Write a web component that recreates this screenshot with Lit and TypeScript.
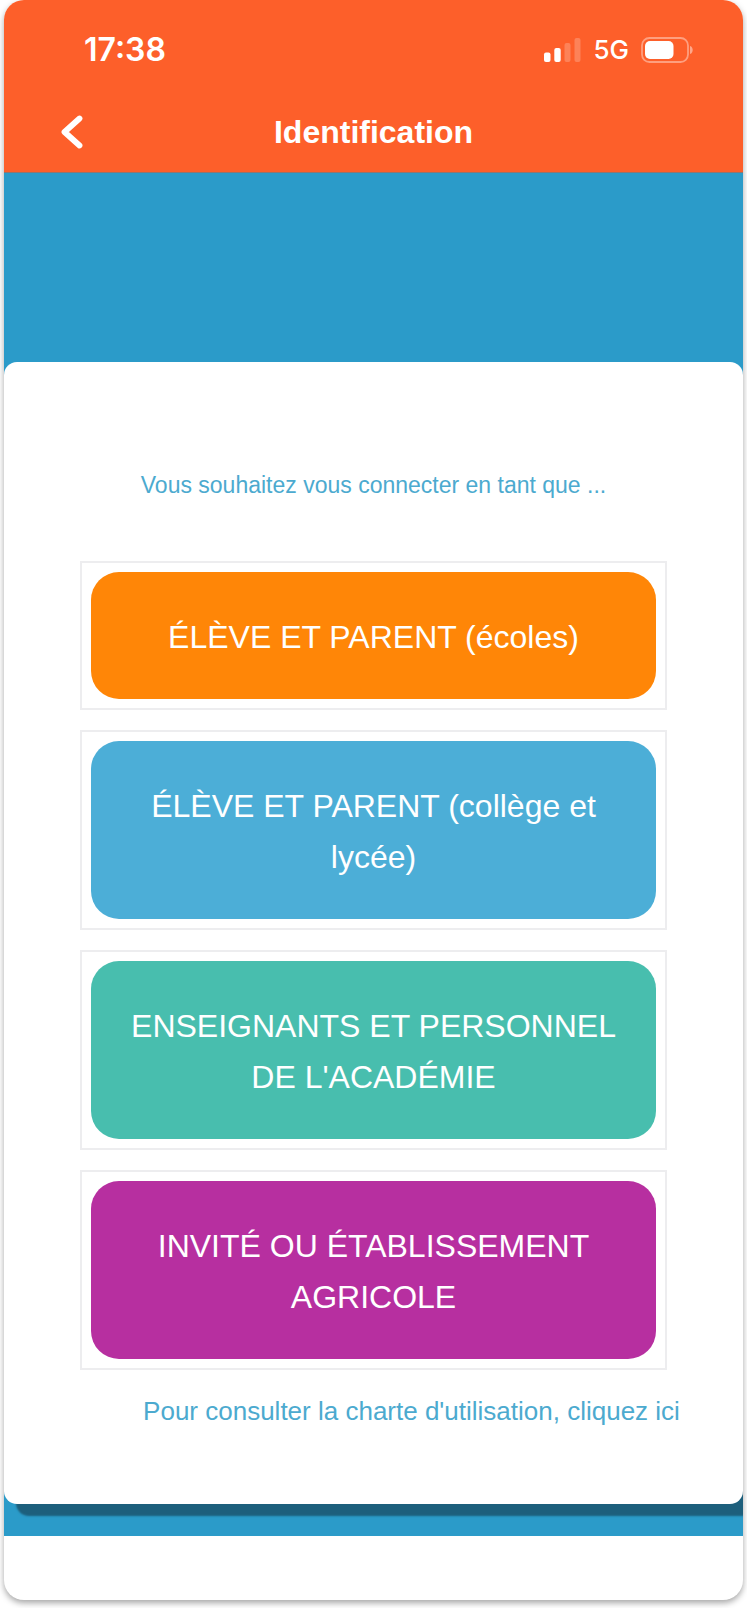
import { LitElement, html, css } from "lit";
import { customElement, property } from "lit/decorators.js";

interface Profile {
  id: string;
  label: string;
}

const PROFILES: Profile[] = [
  { id: "ecole", label: "ÉLÈVE ET PARENT (écoles)" },
  { id: "college", label: "ÉLÈVE ET PARENT (collège et lycée)" },
  { id: "personnel", label: "ENSEIGNANTS ET PERSONNEL DE L'ACADÉMIE" },
  { id: "invite", label: "INVITÉ OU ÉTABLISSEMENT AGRICOLE" },
];

@customElement("status-bar")
export class StatusBar extends LitElement {
  static styles = css`
    :host {
      display: flex;
      align-items: center;
      justify-content: space-between;
      padding: 0 50px 0 80px;
      height: 100px;
      box-sizing: border-box;
      font-family: Inter, "Liberation Sans", sans-serif;
      color: #fff;
    }
    .time {
      font-size: 32px;
      line-height: 40px;
      font-weight: 600;
    }
    .indicators {
      display: flex;
      align-items: center;
      gap: 12px;
    }
    .network {
      font-size: 26px;
      line-height: 40px;
      font-weight: 500;
    }
    svg {
      display: block;
    }
  `;

  render() {
    return html`
      <span class="time">17:38</span>
      <div class="indicators">
        <svg width="38" height="26" viewBox="0 0 38 26" fill="#fff" aria-hidden="true">
          <rect x="1" y="15.5" width="6.5" height="9.5" rx="2" />
          <rect x="11.3" y="11" width="6.4" height="14" rx="2" />
          <rect x="21.5" y="6" width="6" height="19" rx="2" opacity="0.22" />
          <rect x="31.5" y="1" width="6" height="24" rx="2" opacity="0.22" />
        </svg>
        <span class="network">5G</span>
        <svg width="52" height="26" viewBox="0 0 52 26" aria-hidden="true">
          <rect x="1" y="1" width="46" height="24" rx="7.5" fill="none" stroke="#fff" stroke-width="1.8" opacity="0.4" />
          <rect x="4" y="4" width="28.5" height="18" rx="5" fill="#fff" />
          <path d="M49 9 C52.6 10 52.6 16 49 17 Z" fill="#fff" opacity="0.45" />
        </svg>
      </div>
    `;
  }
}

@customElement("profile-choice")
export class ProfileChoice extends LitElement {
  @property() label = "";
  @property({ reflect: true }) profile = "";

  static styles = css`
    :host {
      display: block;
      padding: 9px;
      border: 2px solid #ededef;
    }
    .choice {
      display: block;
      width: 100%;
      margin: 0;
      padding: 40px 30px 36px;
      border: 0;
      border-radius: 28px;
      background: #ff8607;
      color: #fff;
      font-family: "Liberation Sans", Arial, sans-serif;
      font-size: 32px;
      line-height: 51px;
      text-align: center;
      cursor: pointer;
    }
    :host([profile="college"]) .choice {
      background: #4caed7;
    }
    :host([profile="personnel"]) .choice {
      background: #48beae;
    }
    :host([profile="invite"]) .choice {
      background: #b72fa0;
    }
  `;

  render() {
    return html`<button class="choice" type="button">${this.label}</button>`;
  }
}

@customElement("app-root")
export class AppRoot extends LitElement {
  static styles = css`
    :host {
      display: block;
      padding: 0 4px 8px;
      background: #fff;
      font-family: "Liberation Sans", Arial, sans-serif;
    }
    .screen {
      overflow: hidden;
      border-radius: 20px;
      background: #fff;
      box-shadow: 0 3px 6px rgba(0, 0, 0, 0.35);
    }
    .top {
      background: #fd5f2a;
      border-bottom: 1px solid #8d7672;
    }
    .bar {
      display: grid;
      grid-template-columns: 48px 1fr 48px;
      align-items: center;
      height: 72px;
      padding: 0 44px 8px;
      box-sizing: border-box;
    }
    .back {
      display: flex;
      align-items: center;
      justify-content: center;
      width: 48px;
      height: 48px;
      padding: 0;
      border: 0;
      background: none;
      cursor: pointer;
    }
    .title {
      margin: 0;
      color: #fff;
      font-size: 32px;
      line-height: 40px;
      text-align: center;
    }
    .content {
      padding: 189px 0 32px;
      background: #2b9bc9;
    }
    .card {
      padding: 108px 76px 76px;
      border-radius: 13px;
      background: #fff;
      box-shadow: 12px 12px 2px #1d5f7c;
    }
    .prompt {
      margin: 0 0 60px;
      color: #4caacf;
      font-size: 23px;
      line-height: 31px;
      text-align: center;
    }
    .choices {
      display: grid;
      gap: 20px;
    }
    .charter {
      margin: 24px -76px 0 0;
      color: #4caacf;
      font-size: 26px;
      line-height: 34px;
      text-align: center;
    }
    .charter a {
      color: inherit;
      text-decoration: none;
    }
    .footer {
      height: 64px;
    }
  `;

  render() {
    return html`
      <div class="screen">
        <header class="top">
          <status-bar></status-bar>
          <div class="bar">
            <button class="back" type="button" aria-label="Retour">
              <svg width="24" height="34" viewBox="0 0 24 34" aria-hidden="true">
                <path d="M19.5 3.5 L4.5 17 L19.5 30.5" fill="none" stroke="#fff" stroke-width="5.8" stroke-linecap="round" stroke-linejoin="round" />
              </svg>
            </button>
            <h1 class="title">Identification</h1>
          </div>
        </header>
        <main class="content">
          <section class="card">
            <p class="prompt">Vous souhaitez vous connecter en tant que ...</p>
            <div class="choices">
              ${PROFILES.map(
                (p) => html`<profile-choice profile=${p.id} .label=${p.label}></profile-choice>`
              )}
            </div>
            <p class="charter">
              <a href="#charte">Pour consulter la charte d'utilisation, cliquez ici</a>
            </p>
          </section>
        </main>
        <footer class="footer"></footer>
      </div>
    `;
  }
}
